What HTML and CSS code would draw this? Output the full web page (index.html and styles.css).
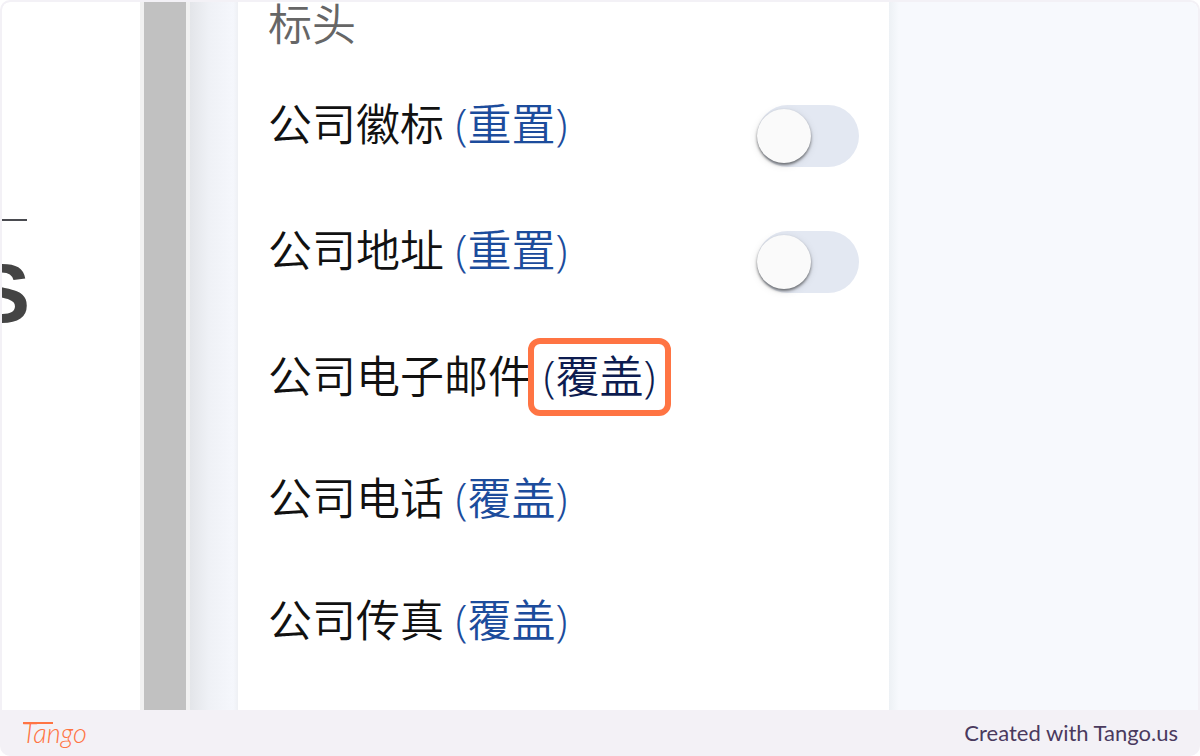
FILE: index.html
```html
<!DOCTYPE html>
<html lang="zh-CN">
<head>
  <meta charset="UTF-8">
  <meta name="viewport" content="width=device-width, initial-scale=1.0">
  <title>标头</title>
  <link rel="stylesheet" href="styles.css">
</head>
<body>
  <div class="frame">
    <main class="screen">
      <div class="document">
        <hr class="document-rule">
        <div class="document-title">S</div>
      </div>
      <div class="scrollbar"></div>
      <div class="gutter"></div>

      <section class="panel">
        <h2 class="panel-title">标头</h2>
        <div class="row">
          <div class="row-text"><label for="logo">公司徽标</label> <a href="#">(重置)</a></div>
          <input type="checkbox" class="toggle" id="logo">
        </div>
        <div class="row">
          <div class="row-text"><label for="address">公司地址</label> <a href="#">(重置)</a></div>
          <input type="checkbox" class="toggle" id="address">
        </div>
        <div class="row">
          <div class="row-text">公司电子邮件 <a href="#" class="highlight">(覆盖)</a></div>
        </div>
        <div class="row">
          <div class="row-text">公司电话 <a href="#">(覆盖)</a></div>
        </div>
        <div class="row">
          <div class="row-text">公司传真 <a href="#">(覆盖)</a></div>
        </div>
      </section>

      <div class="side"></div>
    </main>

    <footer class="footer">
      <span class="logo">Tango</span>
      <span class="credit">Created with Tango.us</span>
    </footer>
  </div>
</body>
</html>
```
FILE: styles.css
```css
* {
  box-sizing: border-box;
}

body {
  margin: 0;
  background-color: #fff;
}

.frame {
  display: flex;
  flex-direction: column;
  height: 100vh;
  border: 2px solid #f3f1f6;
  border-bottom: 0;
  border-radius: 10px;
  background-color: #f3f1f6;
  overflow: hidden;
}

.screen {
  flex: 1;
  display: flex;
  min-height: 0;
  background-color: #fff;
  border-radius: 8px 8px 0 0;
  overflow: hidden;
}

/* document preview, cut off on the left */
.document {
  flex: 0 0 138px;
  display: flex;
  flex-direction: column;
  align-items: flex-start;
  padding-top: 217px;
  overflow: hidden;
}

.document-rule {
  width: 25px;
  height: 2px;
  margin: 0;
  border: 0;
  background-color: #4a4b50;
}

.document-title {
  display: flex;
  justify-content: flex-end;
  width: 28px;
  margin-top: 24px;
  font-family: "Liberation Sans", Arial, sans-serif;
  font-size: 84px;
  font-weight: bold;
  line-height: 96px;
  color: #444;
}

.scrollbar {
  flex: 0 0 50px;
  background-color: #c1c1c1;
  border: solid #f1f1f1;
  border-width: 0 4px;
}

.gutter {
  flex: 0 0 48px;
  background: linear-gradient(to right, #e3e5e9, #eff1f6 40%, #f5f7fc 90%, #eef0f4);
}

/* settings panel */
.panel {
  flex: 21;
  padding: 0 30px;
  background-color: #fff;
  font-family: "Open Sans", "Noto Sans CJK SC", sans-serif;
  font-size: 44px;
  font-weight: 350;
  line-height: 60px;
  color: #111;
}

.panel-title {
  margin: -8px 0 40px;
  font-size: 44px;
  font-weight: 350;
  color: #666;
}

.row {
  display: flex;
  justify-content: space-between;
  align-items: flex-start;
  min-height: 69px;
  margin-bottom: 53px;
}

.row-text {
  white-space: nowrap;
}

.row-text a {
  color: #1c4c9c;
  text-decoration: none;
}

.row-text .highlight {
  position: relative;
  color: #0d1c50;
}

.highlight::after {
  content: "";
  position: absolute;
  inset: -8px -16px -10px -15px;
  border: 6px solid #ff7443;
  border-radius: 12px;
  pointer-events: none;
}

.toggle {
  appearance: none;
  width: 102px;
  height: 62px;
  margin: 11px 0 0;
  padding: 4px 0;
  border-radius: 31px;
  background-color: #e3e8f2;
  cursor: pointer;
}

.toggle::before {
  content: "";
  display: block;
  width: 54px;
  height: 54px;
  border-radius: 50%;
  background-color: #fafafa;
  box-shadow: 0 2px 3px rgba(0, 0, 0, 0.5), 0 2px 8px rgba(0, 0, 0, 0.1);
}

.toggle:checked::before {
  margin-left: auto;
}

.side {
  flex: 11;
  background: linear-gradient(to right, #edf1f5, #f7f9fd 10px);
}

/* footer */
.footer {
  flex: 0 0 46px;
  display: flex;
  justify-content: space-between;
  align-items: center;
  padding: 0 20px;
}

.logo {
  position: relative;
  font-family: Lato, sans-serif;
  font-size: 27px;
  font-style: italic;
  font-weight: 300;
  line-height: 32px;
  color: #ff7443;
}

/* long crossbar of the T */
.logo::before {
  content: "";
  position: absolute;
  top: 5px;
  left: 1px;
  width: 30px;
  height: 2px;
  background-color: #ff7443;
}

.credit {
  font-family: Lato, sans-serif;
  font-size: 22px;
  line-height: 28px;
  color: #4a3a5e;
}
```
